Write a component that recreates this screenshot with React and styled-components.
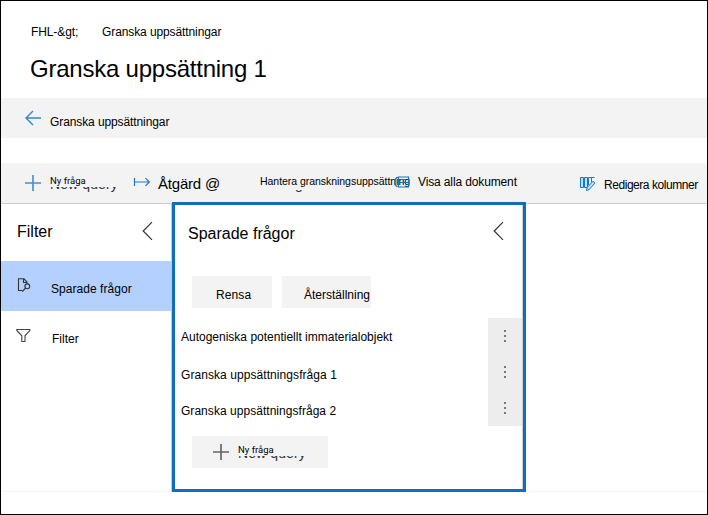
import React from "react";
import styled, { createGlobalStyle } from "styled-components";

const Global = createGlobalStyle`
  * { box-sizing: border-box; }
  body { margin: 0; font-family: "Liberation Sans", Arial, sans-serif; color: #000; background: #fff; }
  svg { display: block; flex: none; }
`;

const Window = styled.div`
  width: 708px;
  height: 515px;
  border: 1px solid #000;
  background: #fff;
  overflow: hidden;
`;

const Text = styled.span`
  display: block;
  flex: none;
  white-space: nowrap;
  font-family: ${(p) => p.$font || "inherit"};
  font-size: ${(p) => p.$size || 12}px;
  line-height: 16px;
  letter-spacing: ${(p) => p.$track || 0}px;
`;

const Header = styled.header`
  height: 97px;
  padding: 23px 0 0 30px;
`;

const Breadcrumbs = styled.nav`
  display: grid;
  grid-template-columns: 71px auto;
  height: 16px;
`;

const Title = styled.h1`
  margin: 15px 0 0 -1px;
  font-size: 24px;
  line-height: 28px;
  font-weight: 400;
  white-space: nowrap;
  letter-spacing: -0.23px;
`;

const BackBar = styled.div`
  display: flex;
  height: 40px;
  margin-bottom: 25px;
  padding: 12px 0 0 24px;
  gap: 9px;
  background: #f3f3f3;
  ${Text} { margin-top: 4px; }
`;

const Toolbar = styled.div`
  display: grid;
  grid-template-columns: 108px 127px 133px 186px auto;
  height: 41px;
  padding-left: 24px;
  background: #f3f3f3;
  border-bottom: 1px solid #ccc;
`;

const Tool = styled.div`
  display: flex;
  gap: ${(p) => p.$gap || 0}px;
  padding-top: ${(p) => p.$top || 0}px;
  > ${Text} { margin-top: ${(p) => p.$drop || 0}px; }
`;

const QueryLabel = styled.div`
  width: 70px;
  height: 20px;
`;

const NewCaption = styled(Text)`
  line-height: 11px;
`;

const Remnant = styled.div`
  height: ${(p) => p.$height}px;
  margin-top: 1px;
  width: 120px;
  overflow: hidden;
  display: flex;
  align-items: flex-end;
  color: #333;
`;

const Body = styled.main`
  display: flex;
  height: 288px;
  border-bottom: 1px solid #f4f4f4;
`;

const Sidebar = styled.aside`
  width: 171px;
  flex: none;
  border-right: 1px solid #ccc;
`;

const SideHead = styled.div`
  display: flex;
  justify-content: space-between;
  height: 57px;
  padding: 17px 18px 0 16px;
  ${Text} { line-height: 22px; }
`;

const SideItem = styled.div`
  display: grid;
  grid-template-columns: ${(p) => p.$indent}px auto;
  align-items: start;
  height: 50px;
  padding: ${(p) => p.$top}px 0 0 ${(p) => 50 - p.$indent + (p.$shift || 0)}px;
  background: ${(p) => (p.$active ? "#b3d0ff" : "transparent")};
  ${Text} { margin-top: 3px; }
`;

const Panel = styled.section`
  width: 354px;
  height: 290px;
  margin-top: -2px;
  border: 3px solid #106ebe;
  background: #fff;
  box-shadow: inset -1px 0 #ccc;
`;

const PanelHead = styled.div`
  display: flex;
  justify-content: space-between;
  height: 71px;
  padding: 16px 19px 0 13px;
  ${Text} { line-height: 22px; margin-top: 2px; }
`;

const Buttons = styled.div`
  display: flex;
  gap: 10px;
  padding-left: 17px;
`;

const Button = styled.button`
  display: flex;
  width: ${(p) => p.$width}px;
  height: 32px;
  border: 0;
  padding: ${(p) => p.$top}px 0 0 ${(p) => p.$left}px;
  gap: 9px;
  background: #f3f3f3;
  color: #000;
  font-family: inherit;
  text-align: left;
`;

const QueryList = styled.div`
  margin: 10px 1px 10px 0;
`;

const QueryRow = styled.div`
  display: flex;
  justify-content: space-between;
  height: 36px;
  padding-left: 6px;
  ${Text} { margin-top: ${(p) => p.$top}px; }
`;

const More = styled.div`
  display: flex;
  flex-direction: column;
  align-items: center;
  gap: 3px;
  width: 34px;
  padding-top: 12px;
  background: #ededed;
`;

const Dot = styled.i`
  width: 2px;
  height: 2px;
  background: #777;
`;

const Plus = ({ color }) => (
  <svg width="16" height="16" viewBox="0 0 16 16" fill="none" stroke={color} strokeWidth="1.7">
    <path d="M8 0v16M0 8h16" />
  </svg>
);

const Chevron = () => (
  <svg width="11" height="20" viewBox="0 0 11 20" fill="none" stroke="#333" strokeWidth="1.2">
    <path d="M10 1.2 1.2 10 10 18.8" />
  </svg>
);

const BackArrow = () => (
  <svg width="16" height="16" viewBox="0 0 16 16" fill="none" stroke="#3585ca" strokeWidth="1.4">
    <path d="M16 8H1M8 1 1 8l7 7" />
  </svg>
);

const ExportArrow = () => (
  <svg width="18" height="10" viewBox="0 0 18 10" fill="none" stroke="#2078c4" strokeWidth="1.2">
    <path d="M1.5 1v8M2 5h14M12.5 1.2 16.3 5l-3.8 3.8" />
  </svg>
);

const DocumentTag = () => (
  <svg width="17" height="12" viewBox="0 0 17 12" fill="none" stroke="#1473c1" strokeWidth="1.2">
    <path d="M5.5 1h10v10h-10zM4.5 1.2C.9 2.5.9 9.5 4.5 10.8M5.5 6.5h10M8 3.5h5" />
  </svg>
);

const EditColumns = () => (
  <svg width="17" height="16" viewBox="0 0 17 16" fill="#c9dff2" stroke="#1877c2" strokeWidth="1">
    <path d="M1.5 1.5h3v10h-3zM5.5 1.5h3v10h-3z" />
    <path d="M9.5 9V1.5h3V6M12.5 1.5h3" fill="none" />
    <path d="m7.5 14.5.7-3L14 5.2l2 1.8-5.8 6.5z" />
  </svg>
);

const SavedSearch = () => (
  <svg width="14" height="15" viewBox="0 0 14 15" fill="none" stroke="#333" strokeWidth="1.1">
    <path d="M5.5 12.5h-4V.8H7l3 3.2v1.5M6.5 1v3.5H10" />
    <circle cx="10.3" cy="8.3" r="2.4" />
    <path d="m8.6 10-3.4 3.6" />
  </svg>
);

const Funnel = () => (
  <svg width="15" height="15" viewBox="0 0 15 15" fill="none" stroke="#444" strokeWidth="1.1">
    <path d="M.8 1.5h13v1L9 7.8v5.7H5.8V7.8L.8 2.5z" />
  </svg>
);

const NewQueryLabel = () => (
  <QueryLabel>
    <NewCaption $size={9.5} $font="Roboto, sans-serif">Ny fråga</NewCaption>
    <Remnant $height={5}>
      <Text $size={14} $track={0.1}>New query</Text>
    </Remnant>
  </QueryLabel>
);

const queries = [
  { name: "Autogeniska potentiellt immaterialobjekt", top: 11, track: 0 },
  { name: "Granska uppsättningsfråga 1", top: 13, track: 0.07 },
  { name: "Granska uppsättningsfråga 2", top: 13, track: 0.04 },
];

export default function App() {
  return (
    <>
      <Global />
      <Window>
        <Header>
          <Breadcrumbs>
            <Text $track={-0.1}>FHL-&amp;gt;</Text>
            <Text $track={-0.1}>Granska uppsättningar</Text>
          </Breadcrumbs>
          <Title>Granska uppsättning 1</Title>
        </Header>
        <BackBar>
          <BackArrow />
          <Text $track={-0.1}>Granska uppsättningar</Text>
        </BackBar>
        <Toolbar>
          <Tool $gap={9} $top={12}>
            <Plus color="#4a91d0" />
            <NewQueryLabel />
          </Tool>
          <Tool $gap={7} $top={14} $drop={-1}>
            <ExportArrow />
            <Text $size={15} $track={-0.2}>Åtgärd @</Text>
          </Tool>
          <Tool $top={10}>
            <QueryLabel>
              <Text $size={10.5} $track={-0.04}>Hantera granskningsuppsättning</Text>
              <Remnant $height={2}>
                <Text $size={14}>Manage review set</Text>
              </Remnant>
            </QueryLabel>
          </Tool>
          <Tool $gap={8} $top={13} $drop={-2}>
            <DocumentTag />
            <Text $track={-0.13}>Visa alla dokument</Text>
          </Tool>
          <Tool $gap={8} $top={13} $drop={1}>
            <EditColumns />
            <Text $track={-0.45}>Redigera kolumner</Text>
          </Tool>
        </Toolbar>
        <Body>
          <Sidebar>
            <SideHead>
              <Text $size={16}>Filter</Text>
              <Chevron />
            </SideHead>
            <SideItem $active $top={17} $indent={34}>
              <SavedSearch />
              <Text $track={0.05}>Sparade frågor</Text>
            </SideItem>
            <SideItem $top={17} $indent={36} $shift={1}>
              <Funnel />
              <Text>Filter</Text>
            </SideItem>
          </Sidebar>
          <Panel>
            <PanelHead>
              <Text $size={16}>Sparade frågor</Text>
              <Chevron />
            </PanelHead>
            <Buttons>
              <Button $width={80} $top={11} $left={24}><Text $track={0.1}>Rensa</Text></Button>
              <Button $width={89} $top={11} $left={22}><Text>Återställning</Text></Button>
            </Buttons>
            <QueryList>
              {queries.map((q) => (
                <QueryRow key={q.name} $top={q.top}>
                  <Text $track={q.track}>{q.name}</Text>
                  <More><Dot /><Dot /><Dot /></More>
                </QueryRow>
              ))}
            </QueryList>
            <Buttons>
              <Button $width={136} $top={8} $left={21}>
                <Plus color="#666" />
                <NewQueryLabel />
              </Button>
            </Buttons>
          </Panel>
        </Body>
      </Window>
    </>
  );
}
